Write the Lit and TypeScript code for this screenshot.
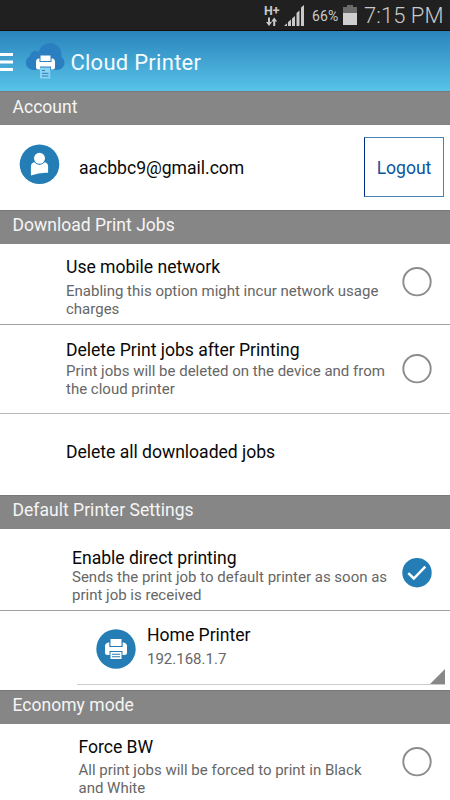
import { LitElement, html, css, svg } from "lit";
import { customElement, property } from "lit/decorators.js";

@customElement("status-bar")
class StatusBar extends LitElement {
  static styles = css`
    :host { display: flex; height: 31px; box-sizing: border-box; background: #202020; border-bottom: 1px solid #180808; color: #c9c9c9; justify-content: flex-end; padding-right: 6px; }
    svg { display: block; flex: none; }
    .net { width: 18px; margin-right: 2px; }
    .signal { width: 22px; margin-right: 6px; }
    .pct { font-size: 14px; line-height: 20px; padding-top: 6px; width: 27px; margin-right: 3px; letter-spacing: 0.1px; white-space: nowrap; }
    .battery { width: 16px; margin-right: 6px; }
    .time { font-size: 22px; line-height: 28px; padding-top: 2px; font-weight: 300; width: 80px; white-space: nowrap; letter-spacing: 0.05px; }
    .h { font: bold 12.500px Roboto, sans-serif; }
  `;
  render() {
    return html`
      <svg class="net" viewBox="0 0 18 30" height="30" fill="#c9c9c9">
        <text class="h" x="0" y="14.500" textLength="15.500" lengthAdjust="spacingAndGlyphs">H+</text>
        <path d="M4 17.500h2v4.500h2l-3 4-3-4h2zM9.200 26v-4.500H7.200l3-4 3 4h-2V26z" />
      </svg>
      <svg class="signal" viewBox="0 0 22 30" height="30" fill="#c9c9c9">
        <path d="M0 26l3-2.800V26zM4 26v-4l3-2.500V26zM8 26v-7.500l3-2.500v10zM12.500 26V13l3-2.500V26zM17 26V7.500L20 5v21z" />
      </svg>
      <div class="pct">66%</div>
      <svg class="battery" viewBox="0 0 16 30" height="30">
        <path d="M1 7h4V5h6v2h4v6H1z" fill="#6b6b6b" /><path d="M1 13h14v12H1z" fill="#cfcfcf" />
      </svg>
      <div class="time">7:15 PM</div>`;
  }
}

const printerGlyph = svg`
  <path d="M14.500 10h11v7h-11z" fill="#fff"/>
  <path d="M12 13.500h1.300V18h13.400v-4.500H28q3 .8 3 3v7q0 2.500-2.500 2.500h-2v-4h-13v4h-2Q9 26 9 23.500v-7q0-2.200 3-3z" fill="#fff"/>
  <path d="M14.500 23h11v7h-11z" fill="#fff"/>
  <path d="M16 25.200h8M16 27.700h8" stroke="#247eb5" stroke-width="1.100"/>`;

@customElement("app-bar")
class AppBar extends LitElement {
  static styles = css`
    :host { display: flex; height: 60px; background: linear-gradient(#2a84bc, #58c3e8); color: #f4fbff; }
    svg { display: block; flex: none; }
    .title { font-size: 22px; line-height: 28px; padding-top: 18px; margin-left: 4.400px; letter-spacing: 0.27px; white-space: nowrap; }
  `;
  render() {
    return html`
      <svg width="66" height="60" viewBox="0 31 66 60">
        <path d="M0 54.500h13M0 62h13M0 69.500h13" stroke="#fff" stroke-width="3" />
        <g fill="#2a7fc0">
          <circle cx="33" cy="62.700" r="7.200" /><circle cx="35.500" cy="56.300" r="5.500" />
          <circle cx="50" cy="54.500" r="11.500" /><circle cx="57.500" cy="62.800" r="7" />
          <path d="M33 58h24.500v11.800H33z" />
        </g>
        <path d="M40.500 55.500h10V61h-10z" fill="#fff" />
        <path d="M38 58.500h1.500V62h12v-3.500H53q2 .8 2 3V67q0 2.500-2.500 2.500H51v-3H40v3h-1.500q-2.500 0-2.500-2.500v-5.500q0-2 2-3z" fill="#fff" />
        <path d="M40 67.500h10.200v11H40z" fill="#8bd3f4" />
        <path d="M42 70.500h3M42 73.300h6.500M42 76h6.500" stroke="#2c7cae" stroke-width="1" />
      </svg>
      <div class="title">Cloud Printer</div>`;
  }
}

@customElement("section-bar")
class SectionBar extends LitElement {
  static styles = css`
    :host { display: block; height: 34px; box-sizing: border-box; padding: 3px 0 0 12.500px; background: #868686; border-top: 1px solid #787878; border-bottom: 1px solid #858585; color: #f5f5f5; font-size: 17.500px; line-height: 22px; letter-spacing: 0.03px; white-space: nowrap; }
    :host(.first) { padding-top: 4px; }
  `;
  render() { return html`<slot></slot>`; }
}

@customElement("round-check")
class RoundCheck extends LitElement {
  @property({ type: Boolean }) checked = false;
  static styles = css`:host, svg { display: block; }`;
  render() {
    return html`<svg width="30" height="30" viewBox="0 0 30 30" fill="none">
      ${this.checked
        ? svg`<circle cx="15" cy="14.700" r="14.700" fill="#247eb5"/><path d="M6.300 15.200l5.500 5.300L23.300 8.700" stroke="#fff" stroke-width="2.500"/>`
        : svg`<circle cx="15" cy="14.700" r="13.700" stroke="#8c8c8c" stroke-width="1.900"/>`}
    </svg>`;
  }
}

@customElement("app-root")
class AppRoot extends LitElement {
  static styles = css`
    :host { display: block; width: 450px; height: 800px; overflow: hidden; background: #fff; color: #080808; font-family: Roboto, sans-serif; }
    svg { display: block; flex: none; }
    .row { display: flex; box-sizing: border-box; }
    .line { border-bottom: 1px solid #a0a0a0; }
    .text { flex: 1; white-space: nowrap; }
    .t { font-size: 17.600px; line-height: 22px; letter-spacing: -0.03px; }
    .d { font-size: 15px; line-height: 18px; color: #666; margin-top: 4px; }
    .account { height: 85px; padding: 0 6px 0 19px; }
    .avatar { margin-top: 19px; }
    .mail { flex: 1; margin: 32px 0 0 19px; }
    .logout { box-sizing: border-box; width: 80px; height: 60px; margin-top: 12px; border: 1px solid #4384b8; border-left-color: #002b85; color: #0c559c; text-align: center; padding-top: 19px; }
    .mobile { height: 81px; padding: 12px 18px 0 66px; }
    .mobile round-check { margin-top: 11px; }
    .after { height: 89px; padding: 14px 18px 0 66px; border-color: #bbb; }
    .after .d { margin-top: 1px; }
    .after round-check { margin-top: 15px; }
    .all { height: 81px; padding: 27px 0 0 66px; }
    .direct { height: 82px; padding: 18px 18px 0 72px; }
    .direct .d { margin-top: -1px; }
    .direct round-check { margin-top: 11px; }
    .home { height: 79px; padding-left: 77px; }
    .spinner { display: flex; box-sizing: border-box; width: 368px; height: 74px; padding: 13px 0 0 19px; border-bottom: 1px solid #ccc; }
    .printer { margin: 5px 11px 0 0; }
    .corner { align-self: flex-end; }
    .force { height: 77px; padding: 12px 18px 0 78.500px; }
    .force .d { margin-top: 3px; }
    .force round-check { margin-top: 11px; }
  `;
  render() {
    return html`
      <status-bar></status-bar>
      <app-bar></app-bar>
      <section-bar class="first">Account</section-bar>
      <div class="row account">
        <svg class="avatar" width="41" height="41" viewBox="0 0 41 41">
          <circle cx="20.500" cy="20.300" r="19.800" fill="#247eb5" />
          <circle cx="20.500" cy="14.300" r="5.500" fill="#fff" />
          <path d="M15.200 18.300q5.300 5.500 10.600 0 3.300.8 3.300 4.200v6.300q-8.500-.5-17.200 2.700v-9q0-3.400 3.300-4.200z" fill="#fff" />
        </svg>
        <div class="mail t">aacbbc9@gmail.com</div>
        <div class="logout t">Logout</div>
      </div>
      <section-bar>Download Print Jobs</section-bar>
      <div class="row line mobile">
        <div class="text">
          <div class="t">Use mobile network</div>
          <div class="d">Enabling this option might incur network usage<br />charges</div>
        </div>
        <round-check></round-check>
      </div>
      <div class="row line after">
        <div class="text">
          <div class="t">Delete Print jobs after Printing</div>
          <div class="d">Print jobs will be deleted on the device and from<br />the cloud printer</div>
        </div>
        <round-check></round-check>
      </div>
      <div class="row all"><div class="t">Delete all downloaded jobs</div></div>
      <section-bar>Default Printer Settings</section-bar>
      <div class="row line direct">
        <div class="text">
          <div class="t">Enable direct printing</div>
          <div class="d">Sends the print job to default printer as soon as<br />print job is received</div>
        </div>
        <round-check checked></round-check>
      </div>
      <div class="home">
        <div class="spinner">
          <svg class="printer" width="40" height="40" viewBox="0 0 40 40">
            <circle cx="20" cy="20" r="19.700" fill="#247eb5" />${printerGlyph}
          </svg>
          <div class="text">
            <div class="t">Home Printer</div>
            <div class="d">192.168.1.7</div>
          </div>
          <svg class="corner" width="15" height="15" viewBox="0 0 15 15"><path d="M15 0v15H0z" fill="#888" /></svg>
        </div>
      </div>
      <section-bar>Economy mode</section-bar>
      <div class="row force">
        <div class="text">
          <div class="t">Force BW</div>
          <div class="d">All print jobs will be forced to print in Black<br />and White</div>
        </div>
        <round-check></round-check>
      </div>`;
  }
}
